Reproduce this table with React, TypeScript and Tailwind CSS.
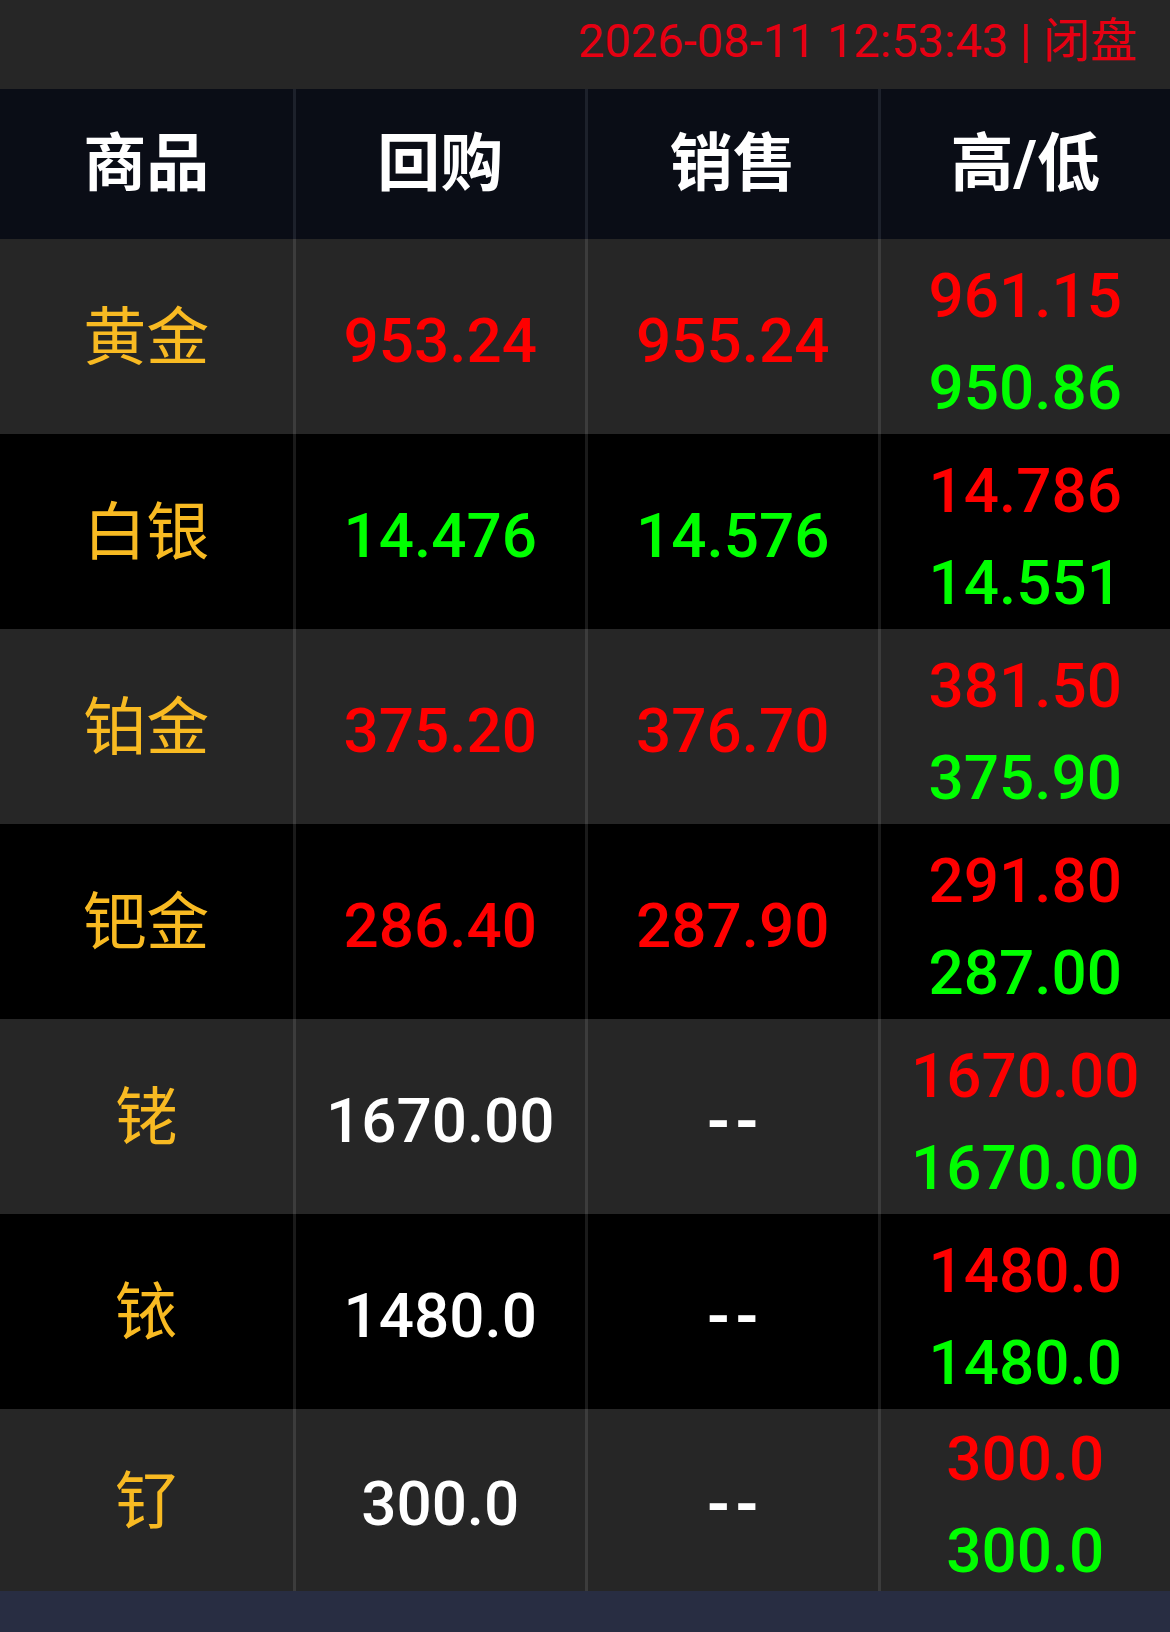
type Row = {
  name: string;
  buy: string;
  sell: string;
  high: string;
  low: string;
  // colour of buy/sell values
  tone: 'up' | 'down' | 'flat';
};

const rows: Row[] = [
  { name: '黄金', buy: '953.24', sell: '955.24', high: '961.15', low: '950.86', tone: 'up' },
  { name: '白银', buy: '14.476', sell: '14.576', high: '14.786', low: '14.551', tone: 'down' },
  { name: '铂金', buy: '375.20', sell: '376.70', high: '381.50', low: '375.90', tone: 'up' },
  { name: '钯金', buy: '286.40', sell: '287.90', high: '291.80', low: '287.00', tone: 'up' },
  { name: '铑', buy: '1670.00', sell: '--', high: '1670.00', low: '1670.00', tone: 'flat' },
  { name: '铱', buy: '1480.0', sell: '--', high: '1480.0', low: '1480.0', tone: 'flat' },
  { name: '钌', buy: '300.0', sell: '--', high: '300.0', low: '300.0', tone: 'flat' },
];

const toneClass = {
  up: 'text-[#ff0000]',
  down: 'text-[#00ff00]',
  flat: 'text-white',
};

const font = "font-['Roboto','Noto_Sans_CJK_SC',sans-serif]";

export default function App() {
  return (
    <div className={`w-[1170px] h-[1632px] bg-[#282d42] ${font} overflow-hidden`}>
      {/* status bar */}
      <div className="h-[89px] bg-[#262626] flex items-center justify-end pr-[33px] pb-[8px]">
        <span className="text-[47px] text-[#e60012] leading-none">2026-08-11 12:53:43 | 闭盘</span>
      </div>

      {/* table head */}
      <div className="grid grid-cols-4 h-[150px] bg-[#0a0d16]">
        {['商品', '回购', '销售', '高/低'].map((h, i) => (
          <div
            key={h}
            className={`flex items-center justify-center text-white text-[63px] font-bold ${i > 0 ? 'border-l-[3px] border-[#1d212b]' : ''}`}
          >
            {h}
          </div>
        ))}
      </div>

      {rows.map((r, idx) => (
        <div
          key={r.name}
          className={`grid grid-cols-4 ${idx === rows.length - 1 ? 'h-[182px]' : 'h-[195px]'} ${idx % 2 === 0 ? 'bg-[#262626]' : 'bg-black'}`}
        >
          <div className="flex items-center justify-center text-[63px] text-[#f8ba22] pt-[4px]">{r.name}</div>
          <div className="flex items-center justify-center border-l-[3px] border-white/10 pt-[8px]">
            <span className={`text-[62px] font-medium leading-none ${toneClass[r.tone]}`}>{r.buy}</span>
          </div>
          <div className="flex items-center justify-center border-l-[3px] border-white/10 pt-[8px]">
            {r.sell === '--' ? (
              <span className="text-[62px] font-bold leading-none tracking-[4px] pl-[4px] text-white">--</span>
            ) : (
              <span className={`text-[62px] font-medium leading-none ${toneClass[r.tone]}`}>{r.sell}</span>
            )}
          </div>
          <div className="flex flex-col items-center justify-center gap-[30px] border-l-[3px] border-white/10 pt-[10px]">
            <span className="text-[62px] font-medium leading-none text-[#ff0000]">{r.high}</span>
            <span className="text-[62px] font-medium leading-none text-[#00ff00]">{r.low}</span>
          </div>
        </div>
      ))}
    </div>
  );
}
